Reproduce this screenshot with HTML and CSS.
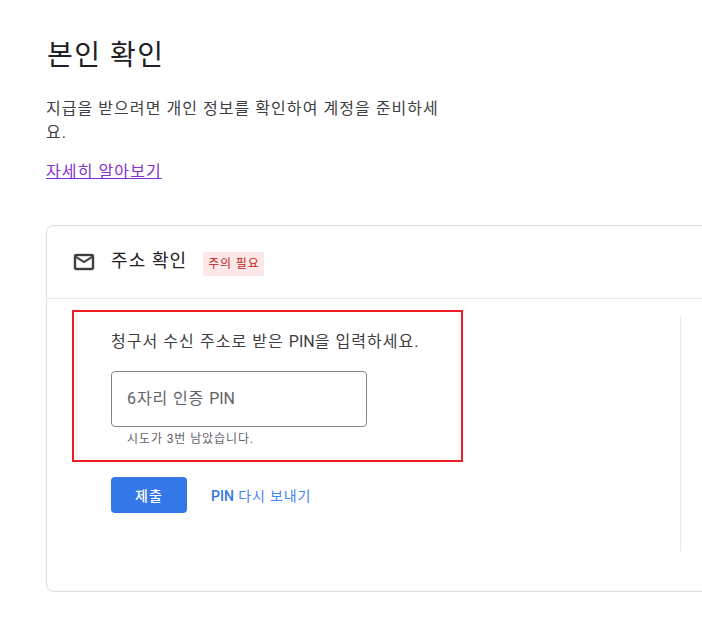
FILE: index.html
```html
<!DOCTYPE html>
<html lang="ko">
<head>
<meta charset="utf-8">
<title>본인 확인</title>
<link rel="stylesheet" href="styles.css">
</head>
<body>
<main class="page">
  <h1 class="title">본인 확인</h1>
  <p class="intro">지급을 받으려면 개인 정보를 확인하여 계정을 준비하세요.</p>
  <a class="learn" href="#">자세히 알아보기</a>
  <section class="card">
    <header class="card-head">
      <svg class="mail" viewBox="0 0 24 24" width="24" height="24" aria-hidden="true"><path d="M22 6c0-1.100-.9-2-2-2H4c-1.100 0-2 .9-2 2v12c0 1.100.9 2 2 2h16c1.100 0 2-.9 2-2V6zm-2 0l-8 5-8-5h16zm0 12H4V8l8 5 8-5v10z"/></svg>
      <h2 class="card-title">주소 확인</h2>
      <span class="badge">주의 필요</span>
    </header>
    <div class="card-body">
      <div class="main-col">
        <div class="highlight">
          <p class="prompt">청구서 수신 주소로 받은 <span class="latin">PIN</span>을 입력하세요.</p>
          <div class="field">6자리 인증 <span class="latin">PIN</span></div>
          <p class="hint">시도가 3번 남았습니다.</p>
        </div>
        <div class="actions">
          <button class="submit" type="button">제출</button>
          <a class="resend" href="#"><b class="latin">PIN</b> 다시 보내기</a>
        </div>
      </div>
      <div class="side"></div>
    </div>
  </section>
</main>
</body>
</html>
```
FILE: styles.css
```css
html, body {
  margin: 0;
  padding: 0;
  height: 624px;
  overflow: hidden;
  background: #fff;
}
body {
  font-family: Roboto, "Noto Sans CJK KR", sans-serif;
  color: #3c4043;
}
.latin {
  letter-spacing: 0;
}
.page {
  padding: 34px 0 0 46px;
  width: 800px;
}
.title {
  margin: 0 0 0 1px;
  font-size: 28px;
  line-height: 44px;
  font-weight: 400;
  letter-spacing: 1.5px;
  color: #202124;
}
.intro {
  margin: 19px 0 0;
  width: 400px;
  font-size: 16px;
  line-height: 24px;
  letter-spacing: 1.05px;
  color: #3c4043;
}
.learn {
  display: inline-block;
  margin-top: 15px;
  font-size: 16px;
  line-height: 24px;
  letter-spacing: 1.1px;
  color: #8430ce;
  text-decoration: underline;
}
.card {
  margin-top: 41px;
  width: 800px;
  height: 367px;
  box-sizing: border-box;
  border: 1px solid #dadce0;
  border-radius: 8px;
}
.card-head {
  display: flex;
  align-items: center;
  height: 72px;
  padding-left: 25px;
  border-bottom: 1px solid #e8eaed;
}
.mail {
  fill: #3c4043;
  stroke: #3c4043;
  stroke-width: 0.4;
  flex: none;
}
.card-title {
  margin: 0 0 2px 15px;
  font-size: 18px;
  line-height: 24px;
  font-weight: 400;
  letter-spacing: 1.1px;
  color: #202124;
}
.badge {
  margin: 4px 0 0 16px;
  padding: 0 4px 0 5px;
  font-size: 12px;
  line-height: 24px;
  letter-spacing: 0.85px;
  color: #c5221f;
  background: #fce8e6;
  border-radius: 2px;
}
.card-body {
  display: flex;
  padding: 11px 0 0 25px;
}
.main-col {
  width: 608px;
}
.highlight {
  box-sizing: border-box;
  width: 391px;
  height: 152px;
  border: 2px solid #ed1c24;
  padding: 18px 0 0 37px;
}
.prompt {
  margin: 0;
  font-size: 16px;
  line-height: 24px;
  letter-spacing: 1.05px;
}
.field {
  box-sizing: border-box;
  width: 256px;
  height: 56px;
  margin-top: 17px;
  padding-left: 15px;
  border: 1px solid #80868b;
  border-radius: 4px;
  font-size: 16px;
  line-height: 54px;
  letter-spacing: 0.9px;
  color: #5f6368;
}
.hint {
  margin: 4px 0 0 16px;
  font-size: 12px;
  line-height: 16px;
  letter-spacing: 0.9px;
  color: #5f6368;
}
.actions {
  display: flex;
  align-items: center;
  margin: 15px 0 0 39px;
}
.submit {
  width: 76px;
  height: 36px;
  padding: 0;
  border: 0;
  border-radius: 4px;
  background: #3477e8;
  color: #fff;
  font-family: inherit;
  font-size: 14px;
  font-weight: 500;
  letter-spacing: 1px;
}
.resend {
  margin-left: 24px;
  font-size: 14px;
  letter-spacing: 0.85px;
  color: #4285f4;
  text-decoration: none;
}
.resend b {
  font-weight: 500;
  color: #3477e8;
}
.side {
  width: 1px;
  height: 235px;
  margin: 6px 0 0 0;
  background: #e8eaed;
}
```
